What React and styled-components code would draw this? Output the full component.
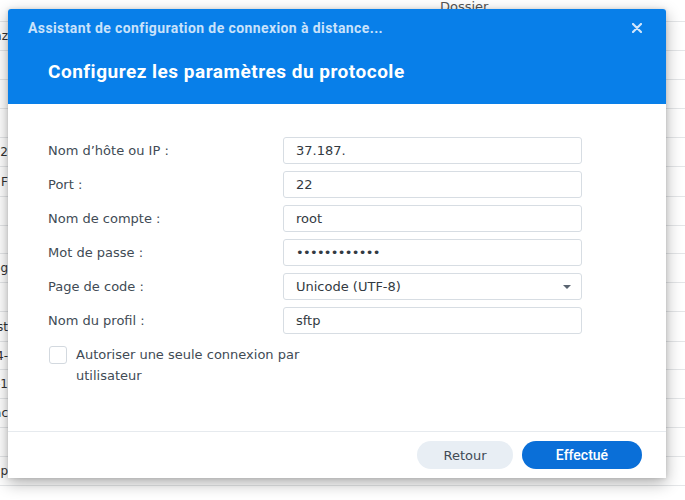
import React from "react";
import styled, { createGlobalStyle } from "styled-components";

const GlobalStyle = createGlobalStyle`
  html, body { margin: 0; padding: 0; background: #fff; }
  body { font-family: "DejaVu Sans", Verdana, sans-serif; overflow: hidden; }
  * { box-sizing: border-box; }
`;

const Page = styled.div`
  position: relative;
  width: 685px;
  height: 500px;
  overflow: hidden;
  background: #fff;
`;

const List = styled.div`
  display: flex;
  flex-direction: column;
`;

const HeaderRow = styled.div`
  height: 22px;
  display: flex;
  border-bottom: 1px solid #e4e6e8;
  font-size: 13px;
  color: #555;
`;

const HeaderCell = styled.div`
  margin-left: ${(p) => p.$left}px;
  line-height: 16px;
  margin-top: -1px;
`;

const Row = styled.div`
  height: ${(p) => p.$h}px;
  display: flex;
  align-items: center;
  border-bottom: 1px solid #e4e6e8;
  font-size: 12px;
  color: #333;
`;

const TailCell = styled.div`
  width: 8px;
  overflow: hidden;
  display: flex;
  justify-content: flex-end;
  white-space: nowrap;
`;

const Dialog = styled.div`
  position: absolute;
  left: 8px;
  top: 9px;
  width: 658px;
  height: 469px;
  background: #fff;
  border-radius: 3px 3px 0 0;
  box-shadow: 0 5px 16px rgba(0, 0, 0, 0.32), 0 0 4px rgba(0, 0, 0, 0.12);
  display: flex;
  flex-direction: column;
  overflow: hidden;
`;

const Header = styled.div`
  height: 95px;
  background: #087fe9;
  display: flex;
  flex-direction: column;
  padding: 0 20px;
`;

const TopBar = styled.div`
  height: 38px;
  display: flex;
  align-items: center;
  justify-content: space-between;
`;

const WizardTitle = styled.div`
  font-family: Roboto, "Noto Sans", sans-serif;
  font-weight: 700;
  font-size: 14px;
  letter-spacing: 0.4px;
  color: #c9e2fb;
`;

const CloseBtn = styled.button`
  border: 0;
  background: transparent;
  padding: 0;
  width: 12px;
  height: 12px;
  margin-right: 3px;
  display: flex;
  align-items: center;
  justify-content: center;
  cursor: pointer;
`;

const Heading = styled.h1`
  margin: 13px 0 0 20px;
  font-family: Roboto, "Noto Sans", sans-serif;
  font-weight: 700;
  font-size: 19px;
  letter-spacing: 0.5px;
  line-height: 24px;
  color: #fff;
`;

const Body = styled.div`
  flex: 1;
  padding: 33px 84px 0 40px;
  display: flex;
  flex-direction: column;
`;

const Form = styled.div`
  display: grid;
  grid-template-columns: 235px 299px;
  grid-auto-rows: 27px;
  row-gap: 7px;
  align-items: center;
`;

const Label = styled.label`
  font-size: 13px;
  color: #414b55;
`;

const Field = styled.div`
  position: relative;
  height: 27px;
  border: 1px solid #d7dde3;
  border-radius: 3px;
  background: #fff;
  display: flex;
  align-items: center;
`;

const Input = styled.input`
  border: 0;
  outline: 0;
  background: transparent;
  width: 100%;
  height: 100%;
  padding: 0 12px;
  font-family: "DejaVu Sans", Verdana, sans-serif;
  font-size: 13px;
  color: #333a42;
  letter-spacing: ${(p) => (p.type === "password" ? "-0.7px" : "0")};
`;

const SelectText = styled.div`
  flex: 1;
  padding: 0 12px;
  font-size: 13px;
  color: #333a42;
`;

const Caret = styled.div`
  width: 0;
  height: 0;
  margin-right: 10px;
  border-left: 4px solid transparent;
  border-right: 4px solid transparent;
  border-top: 4px solid #5a6470;
`;

const CheckRow = styled.div`
  margin-top: 10px;
  margin-left: 1px;
  display: flex;
  align-items: flex-start;
  gap: 9px;
`;

const Box = styled.span`
  flex: none;
  width: 18px;
  height: 18px;
  margin-top: 2px;
  border: 1px solid #d3d9df;
  border-radius: 3px;
  background: #fff;
`;

const CheckText = styled.span`
  max-width: 240px;
  font-size: 13px;
  line-height: 21px;
  color: #414b55;
`;

const Footer = styled.div`
  height: 47px;
  border-top: 1px solid #e6eaee;
  display: flex;
  align-items: center;
  justify-content: flex-end;
  gap: 9px;
  padding-right: 24px;
`;

const Button = styled.button`
  height: 28px;
  width: ${(p) => p.$w}px;
  border: 0;
  border-radius: 14px;
  cursor: pointer;
  background: ${(p) => (p.$primary ? "#0a6fd8" : "#e8eef4")};
  color: ${(p) => (p.$primary ? "#fff" : "#414b55")};
  font-family: ${(p) =>
    p.$primary ? 'Roboto, "Noto Sans", sans-serif' : '"DejaVu Sans", Verdana, sans-serif'};
  font-weight: ${(p) => (p.$primary ? 500 : 400)};
  font-size: ${(p) => (p.$primary ? 14 : 13)}px;
`;

const rows = [
  { h: 29, t: "Gaz" },
  { h: 29, t: "" },
  { h: 29, t: "" },
  { h: 29, t: "" },
  { h: 29, t: "202" },
  { h: 30, t: "F" },
  { h: 29, t: "" },
  { h: 28, t: "" },
  { h: 29, t: "log" },
  { h: 29, t: "" },
  { h: 30, t: "st" },
  { h: 28, t: "24-" },
  { h: 29, t: "0-1" },
  { h: 29, t: "rac" },
  { h: 29, t: "" },
  { h: 29, t: "p" },
  { h: 29, t: "" },
];

export default function App() {
  return (
    <Page>
      <GlobalStyle />
      <List>
        <HeaderRow>
          <HeaderCell $left={440}>Dossier</HeaderCell>
        </HeaderRow>
        {rows.map((r, i) => (
          <Row key={i} $h={r.h}>
            <TailCell>{r.t}</TailCell>
          </Row>
        ))}
      </List>

      <Dialog>
        <Header>
          <TopBar>
            <WizardTitle>Assistant de configuration de connexion à distance...</WizardTitle>
            <CloseBtn aria-label="Fermer">
              <svg width="10" height="10" viewBox="0 0 10 10">
                <path d="M1 1 L9 9 M9 1 L1 9" stroke="#d2e6fb" strokeWidth="2.2" strokeLinecap="round" />
              </svg>
            </CloseBtn>
          </TopBar>
          <Heading>Configurez les paramètres du protocole</Heading>
        </Header>

        <Body>
          <Form>
            <Label>Nom d’hôte ou IP :</Label>
            <Field><Input readOnly value="37.187." /></Field>
            <Label>Port :</Label>
            <Field><Input readOnly value="22" /></Field>
            <Label>Nom de compte :</Label>
            <Field><Input readOnly value="root" /></Field>
            <Label>Mot de passe :</Label>
            <Field><Input readOnly type="password" value="xxxxxxxxxxxx" /></Field>
            <Label>Page de code :</Label>
            <Field>
              <SelectText>Unicode (UTF-8)</SelectText>
              <Caret />
            </Field>
            <Label>Nom du profil :</Label>
            <Field><Input readOnly value="sftp" /></Field>
          </Form>
          <CheckRow>
            <Box />
            <CheckText>Autoriser une seule connexion par utilisateur</CheckText>
          </CheckRow>
        </Body>

        <Footer>
          <Button $w={96}>Retour</Button>
          <Button $w={120} $primary>Effectué</Button>
        </Footer>
      </Dialog>
    </Page>
  );
}
